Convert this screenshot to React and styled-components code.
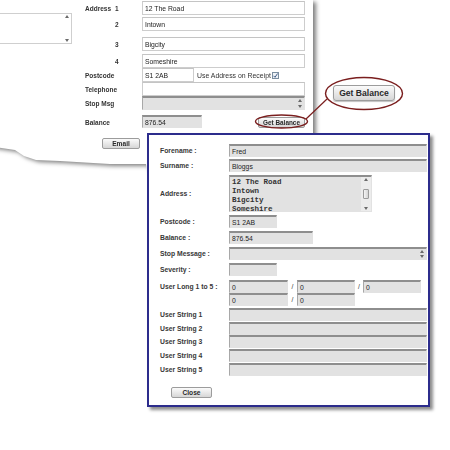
import React from 'react';
import styled, { createGlobalStyle } from 'styled-components';

const Global = createGlobalStyle`
  html, body { margin: 0; padding: 0; background: #fff; }
  body { font-family: "Liberation Sans", Arial, sans-serif; }
  * { box-sizing: border-box; }
`;

const Page = styled.div`
  position: relative;
  width: 450px;
  height: 450px;
  overflow: hidden;
  background: #fff;
`;

/* ---------- background form (torn paper) ---------- */
const PaperShadow = styled.div`
  position: absolute;
  left: -12px;
  top: 0;
  width: 326px;
  height: 170px;
  filter: drop-shadow(3px 2px 2px rgba(0, 0, 0, 0.5));
`;

const Paper = styled.div`
  width: 100%;
  height: 100%;
  background: #fff;
  display: flex;
  padding-left: 12px;
  clip-path: polygon(0 0, 325px 0, 325px 170px, 159px 170px, 158px 164px,
    122px 164px, 72px 161px, 48px 160px, 36px 156px, 27px 150px, 0 146px);
`;

const LeftCol = styled.div`
  width: 85px;
  flex: none;
  padding-top: 13px;
`;

const StubArea = styled.div`
  width: 72px;
  height: 31px;
  border: 1px solid #cfcfcf;
  border-left: none;
  display: flex;
  justify-content: flex-end;
`;

const Form = styled.div`
  display: flex;
  flex-direction: column;
  padding-top: 1px;
`;

const FormRow = styled.div`
  display: grid;
  grid-template-columns: 57px 163px;
  align-items: center;
  height: ${p => p.$h}px;
  margin-top: ${p => p.$mt || 0}px;
`;

const FormLabel = styled.div`
  display: flex;
  align-items: center;
  font-size: 6.5px;
  font-weight: bold;
  color: #333;
  justify-content: ${p => (p.$end ? 'flex-end' : 'flex-start')};
  padding-right: ${p => (p.$end ? 2 : 0)}px;
`;

const Word = styled.span`
  width: 30px;
`;

const Cell = styled.div`
  display: flex;
  align-items: center;
  height: 100%;
`;

const Field = styled.div`
  display: flex;
  align-items: center;
  width: ${p => (p.$w ? `${p.$w}px` : '100%')};
  height: ${p => p.$h || 13}px;
  padding-left: 2px;
  font-size: ${p => p.$fs || 6.8}px;
  color: #222;
  overflow: hidden;
  white-space: nowrap;
  background: ${p => (p.$off ? '#e2e2e2' : '#fff')};
  border: 1px solid ${p => (p.$off ? '#e2e2e2' : '#cdcdcd')};
  border-top: ${p => (p.$off ? '2px solid #8e8e8e' : '1px solid #c4c4c4')};
  border-left-color: ${p => (p.$off ? '#a8a8a8' : '#cdcdcd')};
  flex: none;
`;

const FieldText = styled.span`
  flex: 1;
`;

const Arrows = styled.div`
  width: ${p => p.$w || 8}px;
  height: 100%;
  display: flex;
  flex-direction: column;
  align-items: center;
  justify-content: space-between;
  padding: 1px 0;
  background: ${p => p.$bg || 'transparent'};
`;

const Tri = ({ down }) => (
  <svg width="4" height="3" viewBox="0 0 4 3">
    <path d={down ? 'M0 0 L4 0 L2 3 Z' : 'M0 3 L4 3 L2 0 Z'} fill="#6a6a6a" />
  </svg>
);

const CheckText = styled.span`
  font-size: 6.9px;
  color: #333;
  margin-left: 3px;
`;

const Check = styled.span`
  width: 7px;
  height: 7px;
  margin-left: 1px;
  border: 1px solid #7a8ea0;
  background: #eef2f6;
  display: flex;
  align-items: center;
  justify-content: center;
`;

const Button = styled.div`
  display: flex;
  align-items: center;
  justify-content: center;
  width: ${p => p.$w}px;
  height: ${p => p.$h}px;
  font-size: ${p => p.$fs}px;
  font-weight: bold;
  color: #2a2a2a;
  background: linear-gradient(#fbfbfb, #d6d6d6);
  border: 1px solid #9c9c9c;
  border-radius: 2px;
  flex: none;
`;

const BalanceCell = styled(Cell)`
  justify-content: space-between;
  align-items: flex-start;
`;

const SmallGB = styled(Button)`
  margin-top: 2px;
`;

/* ---------- dialog ---------- */
const Dialog = styled.div`
  position: absolute;
  left: 147px;
  top: 133px;
  width: 283px;
  height: 274px;
  background: #fff;
  border: 2px solid #2c2c8c;
  box-shadow: 3px 3px 3px rgba(0, 0, 0, 0.45);
  padding: 9px 0 0 11px;
  display: flex;
  flex-direction: column;
`;

const DRow = styled.div`
  display: grid;
  grid-template-columns: 69px 198px;
  align-items: ${p => (p.$center ? 'center' : 'start')};
  margin-top: ${p => p.$mt || 0}px;
`;

const DLabel = styled.div`
  font-size: 6.8px;
  font-weight: bold;
  color: #383838;
  line-height: 13px;
  white-space: nowrap;
`;

const Mono = styled.div`
  flex: 1;
  height: 100%;
  font-family: "Liberation Mono", "Courier New", monospace;
  font-size: 7.5px;
  font-weight: bold;
  line-height: 9px;
  color: #333;
  padding-top: 1px;
`;

const Thumb = styled.div`
  width: 6px;
  height: 10px;
  border: 1px solid #9a9a9a;
  border-radius: 1px;
  background: linear-gradient(90deg, #f4f4f4, #d4d4d4);
`;

const LongGrid = styled.div`
  display: grid;
  grid-template-columns: 59px 9px 58px 8px 58px;
  grid-auto-rows: 13px;
`;

const Slash = styled.span`
  font-size: 6.8px;
  color: #333;
  display: flex;
  align-items: center;
  justify-content: center;
`;

const CloseRow = styled.div`
  margin-top: 11px;
  padding-left: 11px;
`;

/* ---------- callout ---------- */
const BigButton = styled(Button)`
  position: absolute;
  left: 333px;
  top: 85px;
  border-radius: 3px;
  box-shadow: 0 1px 1px rgba(0, 0, 0, 0.25);
`;

const Annotation = styled.svg`
  position: absolute;
  left: 0;
  top: 0;
  pointer-events: none;
`;

const addr = ['12 The Road', 'Intown', 'Bigcity', 'Someshire'];

export default function App() {
  return (
    <Page>
      <Global />
      <PaperShadow>
        <Paper>
          <LeftCol>
            <StubArea>
              <Arrows $w={8}>
                <Tri />
                <Tri down />
              </Arrows>
            </StubArea>
          </LeftCol>
          <Form>
            <FormRow $h={14} $mt={0}>
              <FormLabel><Word>Address</Word>1</FormLabel>
              <Field $h={14}>12 The Road</Field>
            </FormRow>
            <FormRow $h={14} $mt={2}>
              <FormLabel><Word />2</FormLabel>
              <Field $h={14}>Intown</Field>
            </FormRow>
            <FormRow $h={14} $mt={6}>
              <FormLabel><Word />3</FormLabel>
              <Field $h={14}>Bigcity</Field>
            </FormRow>
            <FormRow $h={14} $mt={3}>
              <FormLabel><Word />4</FormLabel>
              <Field $h={14}>Someshire</Field>
            </FormRow>
            <FormRow $h={14}>
              <FormLabel>Postcode</FormLabel>
              <Cell>
                <Field $w={52} $h={14}>S1 2AB</Field>
                <CheckText>Use Address on Receipt</CheckText>
                <Check>
                  <svg width="5" height="5" viewBox="0 0 5 5">
                    <path d="M0.5 2.8 L2 4.3 L4.6 0.5" stroke="#2b4a7a" strokeWidth="0.9" fill="none" />
                  </svg>
                </Check>
              </Cell>
            </FormRow>
            <FormRow $h={14}>
              <FormLabel>Telephone</FormLabel>
              <Field $h={14} />
            </FormRow>
            <FormRow $h={14}>
              <FormLabel>Stop Msg</FormLabel>
              <Field $h={14} $off>
                <FieldText />
                <Arrows $w={8}>
                  <Tri />
                  <Tri down />
                </Arrows>
              </Field>
            </FormRow>
            <FormRow $h={14} $mt={5}>
              <FormLabel>Balance</FormLabel>
              <BalanceCell>
                <Field $w={60} $h={13} $off>876.54</Field>
                <SmallGB $w={47} $h={11} $fs={6.4}>Get Balance</SmallGB>
              </BalanceCell>
            </FormRow>
            <FormRow $h={11} $mt={9}>
              <FormLabel $end>
                <Button $w={38} $h={11} $fs={6.6}>Email</Button>
              </FormLabel>
              <div />
            </FormRow>
          </Form>
        </Paper>
      </PaperShadow>

      <BigButton $w={62} $h={16} $fs={8.6}>Get Balance</BigButton>

      <Dialog>
        <DRow>
          <DLabel>Forename :</DLabel>
          <Field $off>Fred</Field>
        </DRow>
        <DRow $mt={2}>
          <DLabel>Surname :</DLabel>
          <Field $off>Bloggs</Field>
        </DRow>
        <DRow $mt={3} $center>
          <DLabel>Address :</DLabel>
          <Field $off $w={143} $h={37}>
            <Mono>
              {addr.map(l => (
                <div key={l}>{l}</div>
              ))}
            </Mono>
            <Arrows $w={10} $bg="#ececec">
              <Tri />
              <Thumb />
              <Tri down />
            </Arrows>
          </Field>
        </DRow>
        <DRow $mt={3}>
          <DLabel>Postcode :</DLabel>
          <Field $off $w={48}>S1 2AB</Field>
        </DRow>
        <DRow $mt={3}>
          <DLabel>Balance :</DLabel>
          <Field $off $w={84}>876.54</Field>
        </DRow>
        <DRow $mt={3}>
          <DLabel>Stop Message :</DLabel>
          <Field $off>
            <FieldText />
            <Arrows $w={8}>
              <Tri />
              <Tri down />
            </Arrows>
          </Field>
        </DRow>
        <DRow $mt={3}>
          <DLabel>Severity :</DLabel>
          <Field $off $w={48} />
        </DRow>
        <DRow $mt={4}>
          <DLabel>User Long 1 to 5 :</DLabel>
          <LongGrid>
            <Field $off $w={59}>0</Field>
            <Slash>/</Slash>
            <Field $off $w={58}>0</Field>
            <Slash>/</Slash>
            <Field $off $w={58}>0</Field>
            <Field $off $w={59}>0</Field>
            <Slash>/</Slash>
            <Field $off $w={58}>0</Field>
          </LongGrid>
        </DRow>
        <DRow $mt={2}>
          <DLabel>User String 1</DLabel>
          <Field $off />
        </DRow>
        <DRow $mt={1}>
          <DLabel>User String 2</DLabel>
          <Field $off />
        </DRow>
        <DRow $mt={0}>
          <DLabel>User String 3</DLabel>
          <Field $off />
        </DRow>
        <DRow $mt={1}>
          <DLabel>User String 4</DLabel>
          <Field $off />
        </DRow>
        <DRow $mt={1}>
          <DLabel>User String 5</DLabel>
          <Field $off />
        </DRow>
        <CloseRow>
          <Button $w={41} $h={11} $fs={6.6}>Close</Button>
        </CloseRow>
      </Dialog>

      <Annotation width="450" height="450" viewBox="0 0 450 450">
        <ellipse cx="364" cy="93.5" rx="38.5" ry="16" fill="none" stroke="#7a1e1e" strokeWidth="1.4" />
        <ellipse cx="281.5" cy="121.5" rx="26" ry="6.5" fill="none" stroke="#7a1e1e" strokeWidth="1.4" />
        <line x1="327" y1="99" x2="306" y2="119" stroke="#7a1e1e" strokeWidth="1.2" />
      </Annotation>
    </Page>
  );
}
